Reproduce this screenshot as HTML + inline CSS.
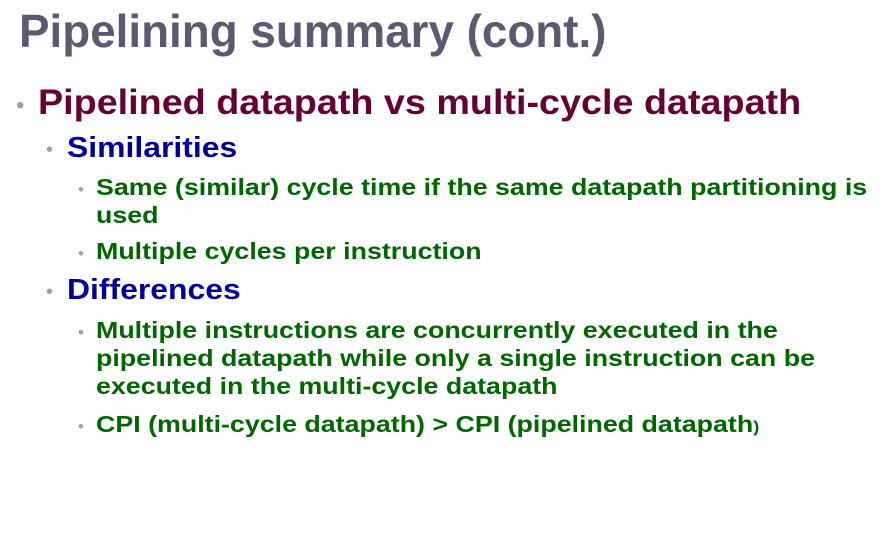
<!DOCTYPE html>
<html><head><style>
body{margin:0;width:895px;height:544px;background:#fff;position:relative;overflow:hidden;font-family:"Liberation Sans",Arial,sans-serif;font-weight:bold}
div{position:absolute;white-space:nowrap;line-height:40px;height:40px;transform-origin:0 50%}
.t{left:19px;top:8px;font-size:46px;color:#5b5a70;line-height:46px;height:46px;transform:scaleX(0.995)}
.l1{left:38px;top:83px;font-size:35px;color:#660033;transform:scaleX(1.078)}
.l2{left:67px;font-size:29px;color:#000099;transform:scaleX(1.1)}
.l3{left:96px;font-size:23.5px;color:#006600;transform:scaleX(1.14)}
.b{color:#9aa3a3;font-weight:normal;position:absolute}
</style></head><body>
<div class="t">Pipelining summary (cont.)</div>
<div class="b" style="left:16px;top:86px;font-size:24px">•</div>
<div class="l1">Pipelined datapath vs multi-cycle datapath</div>
<div class="b" style="left:46px;top:130px;font-size:20px">•</div>
<div class="l2" style="top:128px">Similarities</div>
<div class="b" style="left:78px;top:170px;font-size:17px">•</div>
<div class="l3" style="top:167px">Same (similar) cycle time if the same datapath partitioning is</div>
<div class="l3" style="top:195px">used</div>
<div class="b" style="left:78px;top:234px;font-size:17px">•</div>
<div class="l3" style="top:231px">Multiple cycles per instruction</div>
<div class="b" style="left:46px;top:272px;font-size:20px">•</div>
<div class="l2" style="top:270px">Differences</div>
<div class="b" style="left:78px;top:313px;font-size:17px">•</div>
<div class="l3" style="top:310px">Multiple instructions are concurrently executed in the</div>
<div class="l3" style="top:338px">pipelined datapath while only a single instruction can be</div>
<div class="l3" style="top:366px">executed in the multi-cycle datapath</div>
<div class="b" style="left:78px;top:407px;font-size:17px">•</div>
<div class="l3" style="top:404px">CPI (multi-cycle datapath) &gt; CPI (pipelined datapath<span style="font-size:16px">)</span></div>
</body></html>
